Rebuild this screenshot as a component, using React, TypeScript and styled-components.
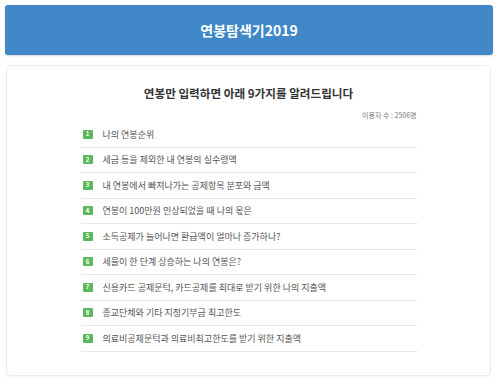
import React from "react";
import styled, { createGlobalStyle } from "styled-components";

const Global = createGlobalStyle`
  html, body { margin: 0; padding: 0; background: #ffffff; }
  body { font-family: "Noto Sans CJK KR", "Noto Sans", sans-serif; }
  * { box-sizing: border-box; }
`;

const Page = styled.div`
  width: 500px;
  height: 384px;
  padding: 5px 7px 0 5px;
  display: flex;
  flex-direction: column;
  gap: 10px;
`;

const Header = styled.header`
  height: 50px;
  background: #4088c8;
  border-radius: 3px;
  display: flex;
  align-items: center;
  justify-content: center;
  box-shadow: 0 1px 2px rgba(0, 0, 0, 0.15);
`;

const HeaderTitle = styled.h1`
  margin: 0;
  color: #ffffff;
  font-size: 14px;
  font-weight: 700;
  line-height: 1;
`;

const Card = styled.section`
  height: 311px;
  margin: 0 2px 0 1px;
  border: 1px solid #ececec;
  border-radius: 4px;
  box-shadow: 0 1px 2px rgba(0, 0, 0, 0.04);
  padding-top: 20px;
  display: flex;
  flex-direction: column;
  align-items: center;
`;

const Title = styled.h2`
  margin: 0;
  font-size: 11.6px;
  line-height: 14px;
  font-weight: 700;
  color: #333333;
`;

const Content = styled.div`
  width: 336px;
  display: flex;
  flex-direction: column;
`;

const Count = styled.div`
  margin-top: 10px;
  text-align: right;
  font-size: 7px;
  line-height: 10px;
  color: #777777;
`;

const List = styled.ol`
  list-style: none;
  margin: 2px 0 0;
  padding: 0;
`;

const Item = styled.li`
  height: 25.5px;
  border-bottom: 1px solid #e9e9e9;
  display: flex;
  align-items: center;
  padding-left: 2px;
  gap: 10px;
  font-size: 9px;
  color: #555555;
`;

const Badge = styled.span`
  width: 10px;
  height: 9px;
  background: #5cb85c;
  border-radius: 1px;
  color: #ffffff;
  font-size: 6px;
  font-weight: 700;
  display: flex;
  align-items: center;
  justify-content: center;
  line-height: 1;
`;

const items = [
  "나의 연봉순위",
  "세금 등을 제외한 내 연봉의 실수령액",
  "내 연봉에서 빠져나가는 공제항목 분포와 금액",
  "연봉이 100만원 인상되었을 때 나의 몫은",
  "소득공제가 늘어나면 환급액이 얼마나 증가하나?",
  "세율이 한 단계 상승하는 나의 연봉은?",
  "신용카드 공제문턱, 카드공제를 최대로 받기 위한 나의 지출액",
  "종교단체와 기타 지정기부금 최고한도",
  "의료비공제문턱과 의료비최고한도를 받기 위한 지출액",
];

export default function App() {
  return (
    <>
      <Global />
      <Page>
        <Header>
          <HeaderTitle>연봉탐색기2019</HeaderTitle>
        </Header>
        <Card>
          <Title>연봉만 입력하면 아래 9가지를 알려드립니다</Title>
          <Content>
            <Count>이용자 수 : 2506명</Count>
            <List>
              {items.map((t, i) => (
                <Item key={i}>
                  <Badge>{i + 1}</Badge>
                  <span>{t}</span>
                </Item>
              ))}
            </List>
          </Content>
        </Card>
      </Page>
    </>
  );
}
